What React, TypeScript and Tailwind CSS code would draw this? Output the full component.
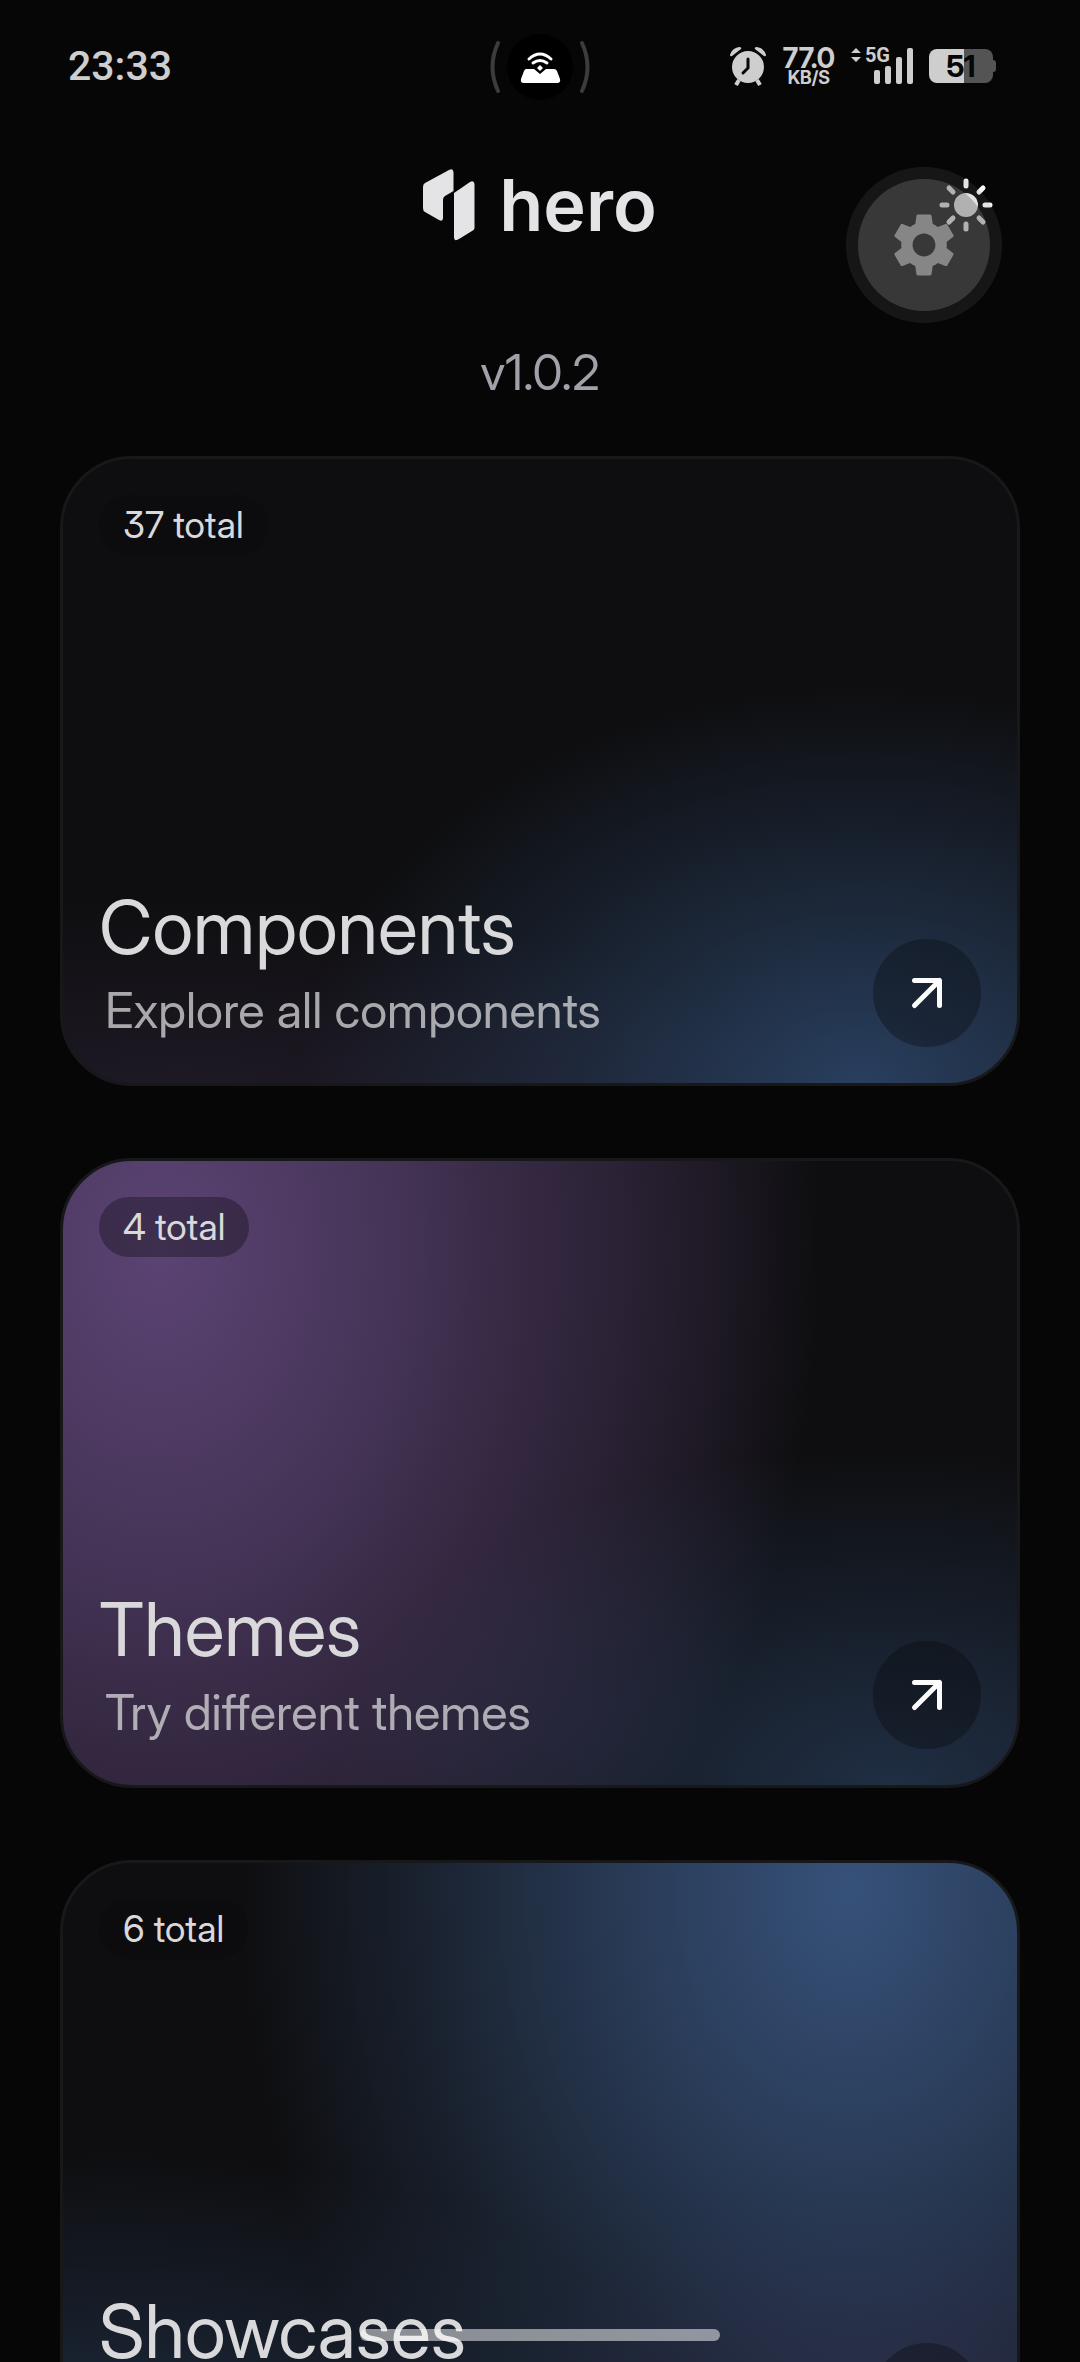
import { MdSettings } from "react-icons/md";

type HomeCard = {
  title: string;
  description: string;
  count: number;
  href: string;
  glow: string;
};

const cards: HomeCard[] = [
  {
    title: "Components",
    description: "Explore all components",
    count: 37,
    href: "#components",
    glow: "bg-[radial-gradient(560px_400px_at_800px_630px,rgb(63_104_160/.55),rgb(63_104_160/.26)_50%,rgb(63_104_160/0)),radial-gradient(620px_220px_at_120px_660px,rgb(124_90_158/.17),rgb(124_90_158/0))]",
  },
  {
    title: "Themes",
    description: "Try different themes",
    count: 4,
    href: "#themes",
    glow: "bg-[radial-gradient(560px_340px_at_830px_630px,rgb(63_104_160/.36),rgb(63_104_160/0)),radial-gradient(660px_900px_at_100px_90px,rgb(124_90_158/.7),rgb(124_90_158/.5)_35%,rgb(124_90_158/.37)_53%,rgb(124_90_158/.26)_70%,rgb(124_90_158/.14)_85%,rgb(124_90_158/0))]",
  },
  {
    title: "Showcases",
    description: "View components in action",
    count: 6,
    href: "#showcases",
    glow: "bg-[radial-gradient(440px_300px_at_840px_620px,rgb(80_64_120/.28),rgb(80_64_120/0)),radial-gradient(600px_340px_at_60px_630px,rgb(63_104_160/.35),rgb(63_104_160/0)),radial-gradient(610px_800px_at_790px_30px,rgb(74_114_173/.67),rgb(74_114_173/.51)_27%,rgb(74_114_173/.4)_43%,rgb(74_114_173/.2)_70%,rgb(74_114_173/0))]",
  },
];

function StatusBar() {
  return (
    <div className="grid grid-cols-[1fr_auto_1fr] items-center pt-7 text-[#cecece]">
      <time className="pl-17 font-['Roboto',sans-serif] text-[41px] leading-[76px] font-medium">
        23:33
      </time>

      {/* Camera cutout with the hotspot indicator */}
      <svg viewBox="0 0 100 76" className="h-19 w-25" aria-hidden="true">
        <circle cx="50" cy="39" r="33" fill="#000" />
        <path d="M8 15Q-3 39 8 63" fill="none" stroke="#3c3c3c" strokeWidth="4" strokeLinecap="round" />
        <path d="M92 15Q103 39 92 63" fill="none" stroke="#3c3c3c" strokeWidth="4" strokeLinecap="round" />
        <g fill="none" stroke="#fff" strokeWidth="3" strokeLinecap="round">
          <path d="M39 31Q50 21 61 31" />
          <path d="M43 35Q50 30 57 35" />
        </g>
        <path d="M36 41h8l6 5 6-5h8q2 0 3 2l3 8q1 4-3 4H34q-4 0-3-4l3-8q1-2 2-2z" fill="#fff" />
        <path d="M50 37l3 3-3 3-3-3z" fill="#fff" />
      </svg>

      <div className="flex items-center gap-4 justify-self-end pr-21">
        <svg viewBox="0 0 38 40" className="h-10 w-[38px]" fill="currentColor" aria-hidden="true">
          <path d="M1 9Q3 2 10 1Q13 1 12 3L3 10Q1 11 1 9zM37 9Q35 2 28 1Q25 1 26 3L35 10Q37 11 37 9z" />
          <circle cx="19" cy="21" r="16" />
          <path d="M10 34l-3 5M28 34l3 5" stroke="currentColor" strokeWidth="4" />
          <path d="M19 13v9l-5 5" fill="none" stroke="#060606" strokeWidth="3" strokeLinecap="round" />
        </svg>
        <div className="flex flex-col items-center font-bold">
          <span className="text-[28px] leading-6">77.0</span>
          <span className="text-[18px] leading-4">KB/S</span>
        </div>
        <div className="flex items-end">
          <div className="flex items-center gap-1 self-start">
            <svg viewBox="0 0 10 16" className="h-4 w-2.5" fill="currentColor" aria-hidden="true">
              <path d="M0 6l5-5 5 5zM0 10l5 5 5-5z" />
            </svg>
            <span className="-mr-4 font-['Roboto',sans-serif] text-[20px] leading-4 font-bold">5G</span>
          </div>
          <svg viewBox="0 0 39 38" className="h-[38px] w-[39px]" fill="currentColor" aria-hidden="true">
            <rect x="0" y="23" width="6" height="14" rx="2" />
            <rect x="11" y="19" width="6" height="18" rx="2" />
            <rect x="22" y="10" width="6" height="27" rx="2" />
            <rect x="33" y="1" width="6" height="36" rx="2" />
          </svg>
        </div>
        <div className="flex items-center">
          <span className="flex h-[34px] w-16 items-center justify-center rounded-lg bg-linear-to-r from-[#cecece] from-54% to-[#545454] to-54% text-[30px] leading-[34px] font-bold text-[#060606]">
            51
          </span>
          <span className="h-3 w-[3px] rounded-r-sm bg-[#545454]" />
        </div>
      </div>
    </div>
  );
}

function Logo() {
  return (
    <div className="flex items-center gap-6 text-[#e4e4e7]">
      <svg viewBox="0 0 52 72" className="h-[72px] w-[52px]" fill="currentColor" aria-hidden="true">
        <path d="M2 14L26 1Q30 -1 30.500 3V22L22 27Q20 28 20 31V49Q20 53 16 51L2 43Q0 42 0 39V18Q0 15 2 14z" />
        <path d="M31 24L47 13Q51 11 51.500 15V59Q51.500 61 49 62L36 70Q31 73 31 68z" />
      </svg>
      <span className="font-['Inter',sans-serif] text-[72px] leading-[72px] font-semibold">hero</span>
    </div>
  );
}

function SunIcon() {
  return (
    <svg viewBox="0 0 54 54" className="size-[54px]" aria-hidden="true">
      <circle cx="27" cy="27" r="12" fill="#fcfcfc" />
      <path
        d="M27 3v5M27 46v5M3 27h5M46 27h5M10 10l4 4M40 40l4 4M10 44l4-4M40 14l4-4"
        stroke="#fcfcfc"
        strokeWidth="5"
        strokeLinecap="round"
      />
    </svg>
  );
}

function Card({ title, description, count, href, glow }: HomeCard) {
  return (
    <a
      href={href}
      className={`flex h-[630px] flex-col justify-between rounded-[72px] border-3 border-[#18181b] bg-[#0e0e10] bg-origin-border p-9 ${glow}`}
    >
      <span className="self-start rounded-[30px] bg-[#09090b]/35 px-6 text-[37px] leading-[60px] text-[#d9d9db]">
        {count} total
      </span>
      <div className="flex items-end justify-between">
        <div>
          <h2 className="text-[74px] leading-[96px] text-[#d9d9db]">{title}</h2>
          <p className="pl-1.5 text-[49px] leading-[72px] text-[#d9d9db]/75">{description}</p>
        </div>
        <span className="flex size-27 items-center justify-center rounded-full bg-[#09090b]/35">
          <svg viewBox="0 0 36 36" className="size-9" fill="none" stroke="#fcfcfc" strokeWidth="5" strokeLinecap="round" strokeLinejoin="round" aria-hidden="true">
            <path d="M5.500 5.500h25v25M30.500 5.500l-25 25" />
          </svg>
        </span>
      </div>
    </a>
  );
}

export default function App() {
  return (
    <div className="relative h-screen overflow-hidden bg-[#060606] font-['Inter_Display','Inter',sans-serif] [font-feature-settings:'cv09']">
      <div className="h-full overflow-y-auto [scrollbar-width:none]">
        <StatusBar />

        <header className="grid grid-cols-3 items-center px-[87px] pt-[65px]">
          <div className="col-start-2 justify-self-center">
            <Logo />
          </div>
          <button type="button" aria-label="Toggle theme" className="justify-self-end">
            <SunIcon />
          </button>
        </header>

        <main className="px-15 pt-24 pb-18">
          <p className="text-center text-[49px] leading-[72px] text-[#a1a1aa]">v1.0.2</p>
          <div className="mt-[47px] flex flex-col gap-18">
            {cards.map((card) => (
              <Card key={card.title} {...card} />
            ))}
          </div>
        </main>
      </div>

      {/* Floating dev menu button */}
      <button
        type="button"
        aria-label="Settings"
        className="absolute top-[167px] right-[78px] rounded-full bg-[#6a6a6a]/17 p-3"
      >
        <span className="flex size-33 items-center justify-center rounded-full bg-[#6c6c6c]/41 text-[#868686]">
          <MdSettings className="size-[76px]" />
        </span>
      </button>

      {/* Home indicator */}
      <div className="absolute inset-x-0 bottom-[21px] mx-auto h-3 w-[360px] rounded-full bg-white/50" />
    </div>
  );
}
